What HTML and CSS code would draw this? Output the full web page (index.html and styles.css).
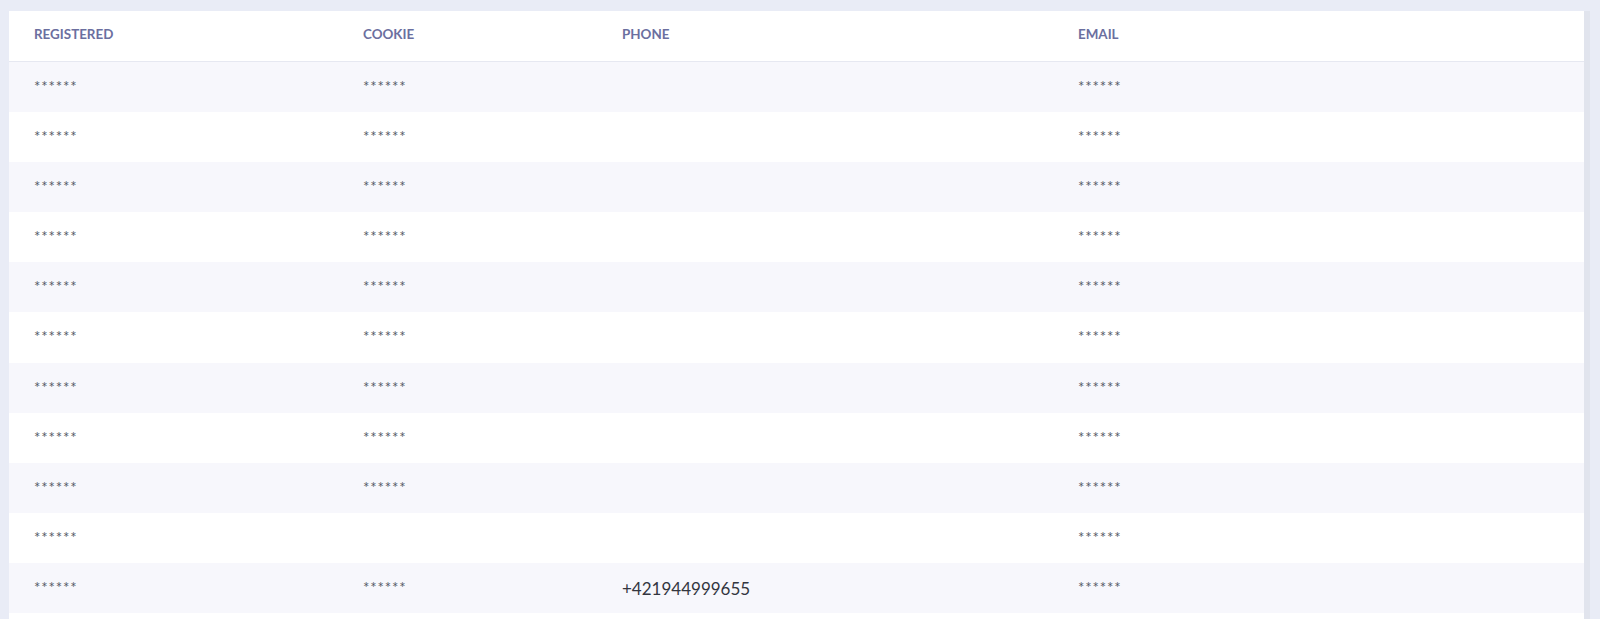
FILE: index.html
```html
<!DOCTYPE html>
<html>
<head>
<meta charset="utf-8">
<link rel="stylesheet" href="styles.css">
</head>
<body>
<div class="page">
  <div class="card">
    <div class="row head">
      <div class="cell">REGISTERED</div>
      <div class="cell">COOKIE</div>
      <div class="cell">PHONE</div>
      <div class="cell">EMAIL</div>
    </div>
    <div class="row"><div class="cell mask">******</div><div class="cell mask">******</div><div class="cell"></div><div class="cell mask">******</div></div>
    <div class="row"><div class="cell mask">******</div><div class="cell mask">******</div><div class="cell"></div><div class="cell mask">******</div></div>
    <div class="row"><div class="cell mask">******</div><div class="cell mask">******</div><div class="cell"></div><div class="cell mask">******</div></div>
    <div class="row"><div class="cell mask">******</div><div class="cell mask">******</div><div class="cell"></div><div class="cell mask">******</div></div>
    <div class="row"><div class="cell mask">******</div><div class="cell mask">******</div><div class="cell"></div><div class="cell mask">******</div></div>
    <div class="row"><div class="cell mask">******</div><div class="cell mask">******</div><div class="cell"></div><div class="cell mask">******</div></div>
    <div class="row"><div class="cell mask">******</div><div class="cell mask">******</div><div class="cell"></div><div class="cell mask">******</div></div>
    <div class="row"><div class="cell mask">******</div><div class="cell mask">******</div><div class="cell"></div><div class="cell mask">******</div></div>
    <div class="row"><div class="cell mask">******</div><div class="cell mask">******</div><div class="cell"></div><div class="cell mask">******</div></div>
    <div class="row"><div class="cell mask">******</div><div class="cell"></div><div class="cell"></div><div class="cell mask">******</div></div>
    <div class="row"><div class="cell mask">******</div><div class="cell mask">******</div><div class="cell phone">+421944999655</div><div class="cell mask">******</div></div>
    <div class="row"><div class="cell"></div><div class="cell"></div><div class="cell"></div><div class="cell"></div></div>
  </div>
  <div class="track"></div>
</div>
</body>
</html>
```
FILE: styles.css
```css
html, body {
  margin: 0;
  padding: 0;
  height: 100%;
  overflow: hidden;
}
body {
  background: #e9ecf6;
  font-family: Lato, "Noto Sans", sans-serif;
}
.page {
  display: flex;
  padding: 11px 0 0 9px;
  align-items: stretch;
  height: 100%;
  box-sizing: border-box;
}
.card {
  width: 1575px;
  background: #ffffff;
  flex: none;
}
.track {
  width: 6px;
  background: #e1e4ed;
  flex: none;
}
.row {
  display: grid;
  grid-template-columns: 329px 259px 456px 1fr;
  height: 50.1px;
  align-items: center;
}
.row:nth-child(even) {
  background: #f7f7fc;
}
.head {
  height: 50px;
  border-bottom: 1px solid #e6e8f1;
}
.head .cell {
  font-size: 13.4px;
  font-weight: 700;
  color: #6b6f9f;
  padding-bottom: 4px;
}
.cell {
  padding-left: 25px;
}
.mask {
  font-size: 15px;
  color: #555a66;
  letter-spacing: 0.9px;
  align-self: start;
  padding-top: 15px;
}
.phone {
  font-size: 17px;
  color: #33363f;
  padding-top: 2px;
}
```
